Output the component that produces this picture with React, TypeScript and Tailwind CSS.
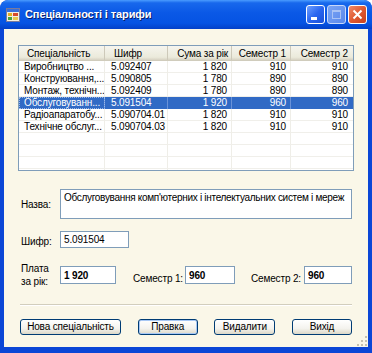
import React from "react";

interface Row {
  name: string;
  code: string;
  sum: string;
  s1: string;
  s2: string;
  selected?: boolean;
}

const rows: Row[] = [
  { name: "Виробництво ...", code: "5.092407", sum: "1 820", s1: "910", s2: "910" },
  { name: "Конструювання,...", code: "5.090805", sum: "1 780", s1: "890", s2: "890" },
  { name: "Монтаж, технічн...", code: "5.092409", sum: "1 780", s1: "890", s2: "890" },
  { name: "Обслуговуванн...", code: "5.091504", sum: "1 920", s1: "960", s2: "960", selected: true },
  { name: "Радіоапаратобу...", code: "5.090704.01", sum: "1 820", s1: "910", s2: "910" },
  { name: "Технічне обслуг...", code: "5.090704.03", sum: "1 820", s1: "910", s2: "910" },
];

const cols = "grid grid-cols-[86px_63px_64px_59px_62px]";

// кнопка у стилі XP
const XpButton: React.FC<{ label: string; w: string; focused?: boolean }> = ({ label, w, focused }) => (
  <button
    className={`${w} h-[16px] rounded-[3px] border border-[#003c74] bg-[linear-gradient(to_bottom,#ffffff_0%,#f4f3ee_60%,#dcd8c8_100%)] leading-none text-black flex items-center justify-center whitespace-nowrap ${
      focused ? "shadow-[inset_0_0_0_1px_#a8c8f5]" : ""
    }`}
  >
    {label}
  </button>
);

const TitleIcon = () => (
  <svg width="14" height="14" viewBox="0 0 14 14">
    <rect x="0.5" y="0.5" width="13" height="13" fill="#f4f0e0" stroke="#7a7a9a" />
    <rect x="1" y="1" width="12" height="3" fill="#3a6fd8" />
    <rect x="2" y="5" width="4" height="3" fill="#e8b020" />
    <rect x="7" y="5" width="5" height="3" fill="#d84a2a" />
    <rect x="2" y="9" width="4" height="3" fill="#4aa040" />
    <rect x="7" y="9" width="5" height="3" fill="#e8c850" />
  </svg>
);

export default function App() {
  return (
    <div className="w-[372px] h-[353px] bg-[#0b46d6] rounded-t-[8px] flex flex-col [font-family:'Liberation_Sans',Arial,sans-serif] text-black overflow-hidden">
      {/* заголовок вікна */}
      <div className="h-[29px] shrink-0 rounded-t-[8px] bg-[linear-gradient(to_bottom,#4a9cff_0%,#1868ec_10%,#0a58e6_45%,#0553e3_80%,#0340c8_100%)] flex items-center pl-[6px] pr-[5px]">
        <TitleIcon />
        <span className="ml-[5px] text-white font-bold text-[11px] tracking-[-0.1px] [text-shadow:1px_1px_0_#0a1e6a]">
          Спеціальності і тарифи
        </span>
        <div className="ml-auto flex gap-[2px]">
          <div className="relative w-[19px] h-[19px] rounded-[3px] border border-white bg-[linear-gradient(135deg,#6fa0ff_0%,#2a66f0_50%,#1a4fd8_100%)]">
            <div className="absolute left-[4px] bottom-[3px] w-[6px] h-[3px] bg-white" />
          </div>
          <div className="relative w-[19px] h-[19px] rounded-[3px] border border-[#c8d8fa] bg-[linear-gradient(135deg,#7aa4f4_0%,#5a88ec_100%)]">
            <div className="absolute left-[4px] top-[4px] w-[9px] h-[9px] border border-[#a9c2f5] border-t-2" />
          </div>
          <div className="w-[19px] h-[19px] rounded-[3px] border border-white bg-[linear-gradient(135deg,#f08a6a_0%,#e05a32_50%,#c8401c_100%)] flex items-center justify-center">
            <svg width="11" height="11" viewBox="0 0 11 11">
              <path d="M1.5 1.5 L9.5 9.5 M9.5 1.5 L1.5 9.5" stroke="white" strokeWidth="2" />
            </svg>
          </div>
        </div>
      </div>

      {/* клієнтська область */}
      <div className="relative mx-[4px] mb-[6px] flex-1 bg-[#faf7e8] px-[14px] pt-[16px] flex flex-col text-[10px] tracking-[-0.15px] leading-[13px]">
        {/* список */}
        <div className="h-[126px] shrink-0 border border-[#7f9db9] bg-white overflow-hidden">
          <div className={`${cols} h-[15px] bg-[linear-gradient(to_bottom,#f6f5ee_0%,#ebeadb_80%,#d6d2c2_100%)] border-b border-[#d0ccbc]`}>
            <div className="pl-[8px] flex items-center border-r border-[#cdc9b9] whitespace-nowrap">Спеціальність</div>
            <div className="pl-[9px] flex items-center border-r border-[#cdc9b9]">Шифр</div>
            <div className="pr-[3px] flex items-center justify-end border-r border-[#cdc9b9] whitespace-nowrap">Сума за рік</div>
            <div className="pr-[4px] flex items-center justify-end border-r border-[#cdc9b9] whitespace-nowrap">Семестр 1</div>
            <div className="pr-[5px] flex items-center justify-end whitespace-nowrap">Семестр 2</div>
          </div>
          {rows.map((r) => (
            <div
              key={r.code}
              className={`${cols} h-[12px] leading-[12px] ${
                r.selected ? "bg-[#316ac5] text-white" : "border-b border-[#f0efea]"
              }`}
            >
              <div
                className={`pl-[5px] whitespace-nowrap overflow-hidden border-r ${
                  r.selected ? "border-[#6a92d8] outline outline-1 outline-dotted outline-offset-[-1px] outline-[#9ab8e8]" : "border-[#efeee8]"
                }`}
              >
                {r.name}
              </div>
              <div className={`pl-[6px] border-r ${r.selected ? "border-[#6a92d8]" : "border-[#efeee8]"}`}>{r.code}</div>
              <div className={`pr-[4px] text-right border-r ${r.selected ? "border-[#6a92d8]" : "border-[#efeee8]"}`}>{r.sum}</div>
              <div className={`pr-[4px] text-right border-r ${r.selected ? "border-[#6a92d8]" : "border-[#efeee8]"}`}>{r.s1}</div>
              <div className="pr-[5px] text-right">{r.s2}</div>
            </div>
          ))}
          {[0, 1, 2, 3].map((i) => (
            <div key={i} className={`${cols} h-[12px] border-b border-[#f0efea]`}>
              <div className="border-r border-[#efeee8]" />
              <div className="border-r border-[#efeee8]" />
              <div className="border-r border-[#efeee8]" />
              <div className="border-r border-[#efeee8]" />
              <div />
            </div>
          ))}
        </div>

        {/* поля форми */}
        <div className="mt-[18px] flex items-start">
          <span className="w-[42px] pl-[3px] pt-[9px] whitespace-nowrap">Назва:</span>
          <div className="w-[292px] h-[30px] border border-[#7f9db9] bg-white pl-[3px] pt-[1px] whitespace-nowrap overflow-hidden tracking-[-0.3px]">
            Обслуговування комп'ютерних і інтелектуальних систем і мереж
          </div>
        </div>

        <div className="mt-[12px] flex items-start">
          <span className="w-[42px] pl-[3px] pt-[4px] whitespace-nowrap">Шифр:</span>
          <div className="w-[69px] h-[17px] border border-[#7f9db9] bg-white pl-[3px] pt-[1px]">5.091504</div>
        </div>

        <div className="mt-[14px] h-[26px] flex items-center">
          <span className="w-[42px] pl-[3px]">
            Плата
            <br />
            за рік:
          </span>
          <div className="w-[56px] h-[18px] border border-[#7f9db9] bg-white pl-[3px] pt-[2px] font-bold">1 920</div>
          <span className="ml-[17px] w-[52px] pt-[6px] whitespace-nowrap">Семестр 1:</span>
          <div className="w-[50px] h-[18px] border border-[#7f9db9] bg-white pl-[3px] pt-[2px] font-bold">960</div>
          <span className="ml-[16px] w-[53px] pt-[6px] whitespace-nowrap">Семестр 2:</span>
          <div className="w-[48px] h-[18px] border border-[#7f9db9] bg-white pl-[3px] pt-[2px] font-bold">960</div>
        </div>

        {/* роздільник */}
        <div className="mt-[16px] mx-[2px] h-[2px] border-t border-[#d2cebd] border-b border-b-white" />

        {/* кнопки */}
        <div className="mt-[13px] mx-[2px] flex justify-between">
          <XpButton label="Нова спеціальність" w="w-[101px]" />
          <XpButton label="Правка" w="w-[60px]" focused />
          <XpButton label="Видалити" w="w-[61px]" />
          <XpButton label="Вихід" w="w-[60px]" />
        </div>

        {/* ручка зміни розміру */}
        <svg className="absolute right-[1px] bottom-[1px]" width="11" height="11" viewBox="0 0 11 11">
          {[
            [9, 1],
            [9, 5],
            [5, 5],
            [9, 9],
            [5, 9],
            [1, 9],
          ].map(([x, y], i) => (
            <rect key={i} x={x} y={y} width="2" height="2" fill="#c5c1b0" />
          ))}
        </svg>
      </div>
    </div>
  );
}
